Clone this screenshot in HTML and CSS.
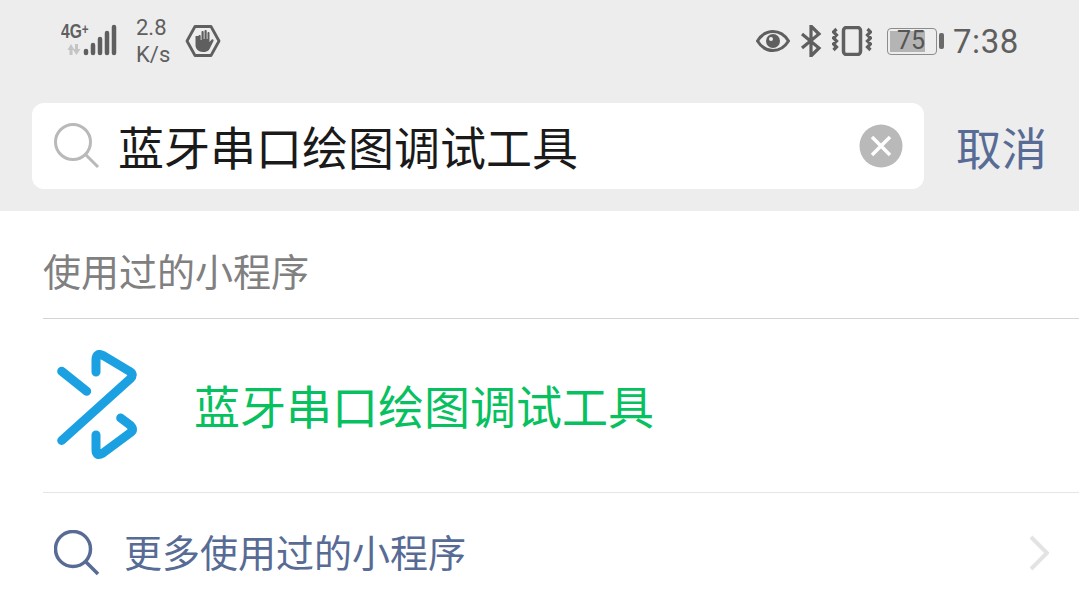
FILE: index.html
```html
<!DOCTYPE html>
<html lang="zh-CN">
<head>
  <meta charset="UTF-8">
  <title>搜索</title>
  <link rel="stylesheet" href="styles.css">
</head>
<body>

  <header class="top">
    <div class="status">
      <div class="status-left">
        <div class="signal">
          <span class="net">4G<sup>+</sup></span>
          <svg class="bars" width="58" height="34" viewBox="0 0 58 34">
            <path d="M7.500 26l3.500-6 3.500 6h-2v5h-3v-5zM15 20h3v5h2.500l-4 6-4-6h2.500z" fill="#c4c4c4"/>
            <path d="M26 27v2M33 21v8M40 15v14M47 9v20M54 3v26" stroke="#5f5f5f" stroke-width="4.500" stroke-linecap="round" fill="none"/>
          </svg>
        </div>
        <div class="speed"><div>2.8</div><div>K/s</div></div>
        <svg class="hand" width="36" height="34" viewBox="0 0 36 34">
          <path d="M10 2.500h16l8 14.500-8 14.500h-16l-8-14.500z" fill="none" stroke="#5f5f5f" stroke-width="2.800" stroke-linejoin="round"/>
          <path d="M10.500 12v9c0 4 3 7 7.500 7s6.500-2 7.500-5l3-6c.6-1.400-1-2.400-2-1.300l-2 2.300v-9c0-1.400-2-1.400-2 0v6h-.800v-8c0-1.400-2.200-1.400-2.200 0v8h-.800v-7c0-1.400-2.200-1.400-2.200 0v8h-.800v-4c0-1.400-2.200-1.400-2.200 0z" fill="#5f5f5f"/>
        </svg>
      </div>
      <div class="status-right">
        <svg width="34" height="24" viewBox="0 0 34 24">
          <path d="M1.500 12c4-6.500 9-9.500 15.500-9.500s11.500 3 15.500 9.500c-4 6.500-9 9.500-15.500 9.500s-11.500-3-15.500-9.500z" fill="none" stroke="#5f5f5f" stroke-width="3"/>
          <circle cx="17" cy="12" r="7" fill="#5f5f5f"/>
          <circle cx="15" cy="10" r="2" fill="#ededed"/>
        </svg>
        <svg width="22" height="32" viewBox="0 0 22 32">
          <path d="M2 9l17 14-8 8v-30l8 8-17 14" fill="none" stroke="#5f5f5f" stroke-width="3.200"/>
        </svg>
        <svg width="40" height="30" viewBox="0 0 40 30">
          <rect x="11.500" y="1.500" width="17" height="27" rx="3" fill="none" stroke="#5f5f5f" stroke-width="3.500"/>
          <path d="M4.500 3l-3 3 3 3-3 3 3 3-3 3 3 3-3 3M35.500 3l3 3-3 3 3 3-3 3 3 3-3 3 3 3" fill="none" stroke="#5f5f5f" stroke-width="3.200"/>
        </svg>
        <div class="battery">
          <div class="battery-body"><div class="battery-fill"></div><span class="battery-num">75</span></div>
          <div class="battery-tip"></div>
        </div>
        <span class="clock">7:38</span>
      </div>
    </div>

    <div class="search-row">
      <div class="search-box">
        <svg width="46" height="46" viewBox="0 0 46 46">
          <circle cx="19" cy="19" r="17.500" fill="none" stroke="#b9b9b9" stroke-width="3"/>
          <path d="M32 32l12 12" stroke="#b9b9b9" stroke-width="3"/>
        </svg>
        <span class="query">蓝牙串口绘图调试工具</span>
        <svg class="clear" width="44" height="44" viewBox="0 0 44 44">
          <circle cx="22" cy="22" r="21.500" fill="#b9b9b9"/>
          <path d="M13 13l18 18M31 13l-18 18" stroke="#fff" stroke-width="3.500"/>
        </svg>
      </div>
      <span class="cancel">取消</span>
    </div>
  </header>

  <main class="results">
    <div class="section-title">使用过的小程序</div>
    <div class="result-item">
      <svg class="app-logo" width="84" height="112" viewBox="0 0 84 112">
        <g fill="none" stroke="#1ba1e2" stroke-width="9" stroke-linecap="round" stroke-linejoin="round">
          <path d="M7.700 21.200l25 20"/>
          <path d="M7.700 90.500l68.300-61.500q5-5-1-8l-25-15q-8-4.500-8 4v12"/>
          <path d="M66.700 68l9.300 7q5 5 0 8l-27 20q-7 4-7-3v-15"/>
        </g>
      </svg>
      <span class="result-name">蓝牙串口绘图调试工具</span>
    </div>
    <div class="more-row">
      <svg width="46" height="46" viewBox="0 0 46 46">
        <circle cx="19" cy="19" r="17.500" fill="none" stroke="#576b95" stroke-width="3.500"/>
        <path d="M32 32l12 12" stroke="#576b95" stroke-width="3.500"/>
      </svg>
      <span class="more-text">更多使用过的小程序</span>
      <svg class="chevron" width="20" height="36" viewBox="0 0 20 36">
        <path d="M2 2l16 16-16 16" fill="none" stroke="#e3e3e3" stroke-width="4"/>
      </svg>
    </div>
  </main>

</body>
</html>
```

FILE: styles.css
```css
* { box-sizing: border-box; }
html, body { height: 100%; }
body {
  margin: 0;
  height: 599px;
  overflow: hidden;
  background: #fff;
  font-family: "Noto Sans CJK SC", "Noto Sans", sans-serif;
}

.top {
  height: 211px;
  background: #ededed;
}

.status {
  display: flex;
  justify-content: space-between;
  align-items: center;
  height: 82px;
  padding: 0 60px 0 60px;
  color: #5f5f5f;
  font-family: Roboto, sans-serif;
}
.status-left, .status-right {
  display: flex;
  align-items: center;
}
.status-right { gap: 10px; }

.signal {
  position: relative;
  width: 58px;
  height: 34px;
}
.bars { display: block; }
.net {
  position: absolute;
  top: -3px;
  left: 1px;
  font-family: "Liberation Sans", sans-serif;
  font-size: 20px;
  font-weight: 700;
  line-height: 20px;
  white-space: nowrap;
  transform: scaleX(0.78);
  transform-origin: left top;
}
.net sup {
  font-size: 15px;
  line-height: 0;
  vertical-align: 4px;
}
.speed {
  margin-left: 18px;
  font-size: 22px;
  line-height: 27px;
  text-align: left;
}
.hand { margin-left: 15px; }

.status-right svg { flex: none; }
.battery {
  display: flex;
  align-items: center;
  margin: 0 1px 0 5px;
}
.battery-body {
  position: relative;
  width: 50px;
  height: 27px;
  padding: 2px;
  border: 1.500px solid #8c8c8c;
  border-radius: 4px;
}
.battery-fill {
  width: 80%;
  height: 100%;
  background: #b4b4b4;
}
.battery-num {
  position: absolute;
  top: 0;
  left: 9px;
  font-size: 25px;
  line-height: 24px;
  color: #555;
}
.battery-tip {
  width: 5px;
  height: 16px;
  margin-left: 2px;
  background: #6a6a6a;
  border-radius: 2px;
}
.clock {
  margin: 2px 0 0 -2px;
  font-size: 33px;
  line-height: 40px;
  letter-spacing: 0.6px;
}

.search-row {
  display: flex;
  align-items: center;
  padding: 21px 32px 0 32px;
}
.search-box {
  display: flex;
  align-items: center;
  flex: 1;
  height: 86px;
  padding: 0 21px 0 22px;
  background: #fff;
  border-radius: 12px;
}
.query {
  flex: 1;
  margin: 0 0 2px 18px;
  font-size: 46px;
  line-height: 60px;
  color: #1a1a1a;
}
.clear { flex: none; }
.cancel {
  width: 91px;
  margin-left: 32px;
  font-size: 45.500px;
  line-height: 60px;
  white-space: nowrap;
  color: #576b95;
}

.section-title {
  padding: 34px 0 0 43px;
  height: 107px;
  font-size: 38px;
  line-height: 50px;
  color: #808080;
}
.result-item {
  display: flex;
  align-items: center;
  height: 175px;
  margin-left: 43px;
  padding-left: 11px;
  border-top: 1px solid #d4d4d4;
  border-bottom: 1px solid #e6e6e6;
}
.app-logo { flex: none; }
.result-name {
  margin: 0 0 4px 56px;
  font-size: 46px;
  line-height: 60px;
  color: #07c160;
}
.more-row {
  display: flex;
  align-items: center;
  height: 106px;
  padding: 14px 30px 0 54px;
}
.more-text {
  flex: 1;
  margin: 0 0 4px 24px;
  font-size: 38px;
  line-height: 50px;
  color: #576b95;
}
.chevron { flex: none; }
```
